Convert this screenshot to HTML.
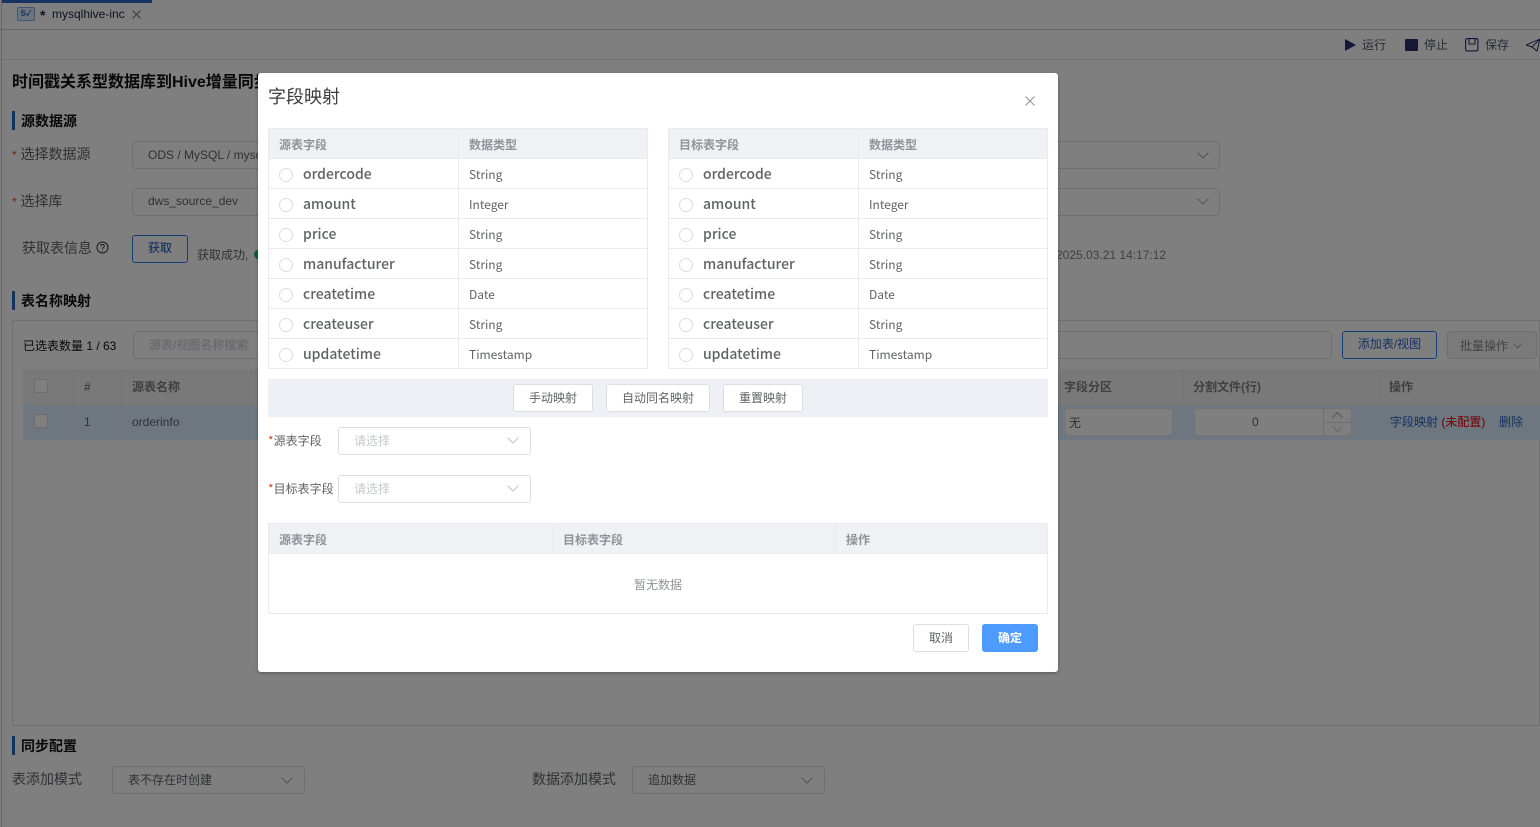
<!DOCTYPE html>
<html><head><meta charset="utf-8">
<style>
html,body{margin:0;padding:0;width:1540px;height:827px;overflow:hidden;background:#fff}
body{position:relative;font-family:"Liberation Sans","Noto Sans CJK SC",sans-serif;font-size:12px;color:#606266}
.a,.t{position:absolute}
.t{white-space:nowrap;line-height:20px}
.sel{position:absolute;border:1px solid #dcdee2;border-radius:4px;box-sizing:border-box;background:#fff}
.chev{position:absolute;width:12px;height:7px}
.bar{position:absolute;width:4px;background:#2d66c4}
.h{font-weight:700;color:#17233d;font-size:14px}
.overlay{position:absolute;left:0;top:0;width:1540px;height:827px;background:rgba(0,0,0,.5)}
.dlg{position:absolute;left:258px;top:73px;width:800px;height:599px;background:#fff;border-radius:3px;box-shadow:0 1px 3px rgba(0,0,0,.3);font-family:"Noto Sans CJK SC","Liberation Sans",sans-serif}
.d{position:absolute}
.dt{position:absolute;white-space:nowrap;line-height:20px}
.tb{position:absolute;width:380px;height:241px;border:1px solid #e8eaec;box-sizing:border-box;background:#fff}
.hd{position:absolute;left:0;top:0;right:0;height:30px;background:#f0f1f4;border-bottom:1px solid #e8eaec;box-sizing:border-box}
.vl{position:absolute;top:0;bottom:0;width:1px;background:#e8eaec}
.hl{position:absolute;left:0;right:0;height:1px;background:#e8eaec}
.th{position:absolute;font-size:12px;font-weight:700;color:#909399;white-space:nowrap;line-height:20px}
.fn{position:absolute;left:34px;font-size:14px;color:#606266;line-height:20px;white-space:nowrap;font-weight:500}
.ty{position:absolute;left:200px;font-size:12px;color:#606266;line-height:20px;white-space:nowrap}
.rd{position:absolute;left:10px;width:14px;height:14px;border:1px solid #dcdee2;border-radius:50%;box-sizing:border-box;background:#fff}
.btn{position:absolute;height:28px;box-sizing:border-box;border:1px solid #dcdee2;border-radius:3px;background:#fff;font-size:12px;color:#606266;text-align:center;line-height:25px}
</style></head>
<body>
<!-- background page -->
<div class="a" style="left:1px;top:0;width:1px;height:827px;background:#ccc"></div>
<div class="a" style="left:2px;top:0;width:150px;height:29px;background:#fff"></div>
<div class="a" style="left:2px;top:0;width:150px;height:3px;background:#2d66c4"></div>
<div class="a" style="left:0;top:29px;width:1540px;height:1px;background:#d0d0d0"></div>
<div class="a" style="left:0;top:59px;width:1540px;height:1px;background:#e4e4e4"></div>
<div class="a" style="left:17px;top:7px;width:18px;height:14px;border:1px solid #86a8e0;background:#dce8fa;border-radius:2px;box-sizing:border-box;font-size:8px;line-height:12px;color:#2d66c4;text-align:center;font-weight:700">S&#10003;</div>
<div class="t" style="left:40px;top:5px;font-size:14px;font-weight:700;color:#17233d">*</div>
<div class="t" style="left:52px;top:4px;font-size:12px;color:#17233d">mysqlhive-inc</div>
<svg class="a" style="left:132px;top:10px" width="9" height="9" viewBox="0 0 9 9"><path d="M.5.5L8.5 8.5M8.5.5L.5 8.5" stroke="#777" stroke-width="1"/></svg>

<svg class="a" style="left:1345px;top:39px" width="11" height="12"><path d="M0 0L11 6L0 12Z" fill="#2b2f6b"/></svg>
<div class="t" style="left:1362px;top:35px;color:#515a6e">运行</div>
<div class="a" style="left:1405px;top:39px;width:13px;height:12px;background:#2b2f6b;border-radius:1px"></div>
<div class="t" style="left:1424px;top:35px;color:#515a6e">停止</div>
<svg class="a" style="left:1465px;top:38px" width="14" height="14" viewBox="0 0 14 14" fill="none" stroke="#2b2f6b" stroke-width="1.1"><rect x=".6" y=".6" width="12.3" height="12.3" rx="1.5"/><path d="M4 .8V6H10V.8"/></svg>
<div class="t" style="left:1485px;top:35px;color:#515a6e">保存</div>
<svg class="a" style="left:1526px;top:38px" width="14" height="14" viewBox="0 0 14 14" fill="none" stroke="#2b2f6b" stroke-width="1"><path d="M0 7L14 1L11 13L6 9L0 7ZM6 9L14 1"/></svg>

<div class="t" style="left:12px;top:73px;font-size:16px;font-weight:700;color:#111">时间戳关系型数据库到Hive增量同步</div>

<div class="bar" style="left:12px;top:111px;height:19px;width:3px"></div>
<div class="t h" style="left:21px;top:111px;color:#111">源数据源</div>
<div class="t" style="left:12px;top:144px;font-size:14px"><span style="color:#ed4014;font-size:12px">*</span> 选择数据源</div>
<div class="sel" style="left:132px;top:141px;width:1088px;height:28px"></div>
<div class="t" style="left:148px;top:145px">ODS / MySQL / mysql</div>
<svg class="chev" style="left:1197px;top:152px" viewBox="0 0 12 7"><path d="M.5.5L6 6L11.5.5" fill="none" stroke="#aaa"/></svg>
<div class="t" style="left:12px;top:191px;font-size:14px"><span style="color:#ed4014;font-size:12px">*</span> 选择库</div>
<div class="sel" style="left:132px;top:188px;width:1088px;height:28px"></div>
<div class="t" style="left:148px;top:191px">dws_source_dev</div>
<svg class="chev" style="left:1197px;top:198px" viewBox="0 0 12 7"><path d="M.5.5L6 6L11.5.5" fill="none" stroke="#aaa"/></svg>
<div class="t" style="left:22px;top:238px;font-size:14px">获取表信息</div>
<svg class="a" style="left:96px;top:241px" width="13" height="13" viewBox="0 0 13 13" fill="none" stroke="#333"><circle cx="6.5" cy="6.5" r="5.5"/><path d="M4.7 5.2C4.7 3 8.3 3 8.3 5.2C8.3 6.4 6.5 6.4 6.5 8"/><path d="M6.5 9.2V10.2"/></svg>
<div class="a" style="left:132px;top:235px;width:56px;height:28px;border:1px solid #2d7ff0;border-radius:3px;box-sizing:border-box;text-align:center;line-height:25px;color:#2d66c4;font-weight:500">获取</div>
<div class="t" style="left:197px;top:245px;color:#666">获取成功,</div>
<div class="a" style="left:254px;top:250px;width:8px;height:9px;border-radius:50%;background:#19be6b"></div>
<div class="t" style="left:1056px;top:245px;color:#808080">2025.03.21 14:17:12</div>

<div class="bar" style="left:12px;top:291px;height:19px;width:3px"></div>
<div class="t h" style="left:21px;top:291px;color:#111">表名称映射</div>
<div class="a" style="left:12px;top:320px;width:1528px;height:406px;border:1px solid #e0e0e0;box-sizing:border-box"></div>
<div class="t" style="left:23px;top:336px;color:#111">已选表数量 1 / 63</div>
<div class="sel" style="left:133px;top:331px;width:1199px;height:28px"></div>
<div class="t" style="left:149px;top:335px;color:#c5c8ce">源表/视图名称搜索</div>
<div class="a" style="left:1342px;top:331px;width:95px;height:28px;border:1px solid #2d7ff0;border-radius:3px;box-sizing:border-box;text-align:center;line-height:25px;color:#2d66c4">添加表/视图</div>
<div class="a" style="left:1447px;top:331px;width:90px;height:28px;border:1px solid #dcdee2;border-radius:3px;box-sizing:border-box;background:#f4f4f4;color:#888;line-height:28px;padding-left:12px">批量操作</div>
<svg class="a" style="left:1513px;top:343px;width:9px;height:6px" viewBox="0 0 9 6"><path d="M.5.5L4.5 5L8.5.5" fill="none" stroke="#aaa"/></svg>

<div class="a" style="left:23px;top:369px;width:1517px;height:36px;background:#f2f3f5"></div>
<div class="a" style="left:23px;top:405px;width:1517px;height:35px;background:#dcecff"></div>
<div class="a" style="left:73px;top:369px;width:1px;height:71px;background:#e6e8eb"></div>
<div class="a" style="left:121px;top:369px;width:1px;height:71px;background:#e6e8eb"></div>
<div class="a" style="left:1183px;top:369px;width:1px;height:71px;background:#e6e8eb"></div>
<div class="a" style="left:1379px;top:369px;width:1px;height:71px;background:#e6e8eb"></div>
<div class="a" style="left:34px;top:379px;width:14px;height:14px;border:1px solid #ddd;background:#fff;box-sizing:border-box;border-radius:2px"></div>
<div class="a" style="left:34px;top:414px;width:14px;height:14px;border:1px solid #ddd;background:#fff;box-sizing:border-box;border-radius:2px"></div>
<div class="t" style="left:84px;top:377px;color:#808080;font-weight:700">#</div>
<div class="t" style="left:132px;top:377px;color:#808080;font-weight:700">源表名称</div>
<div class="t" style="left:1064px;top:377px;color:#808080;font-weight:700">字段分区</div>
<div class="t" style="left:1193px;top:377px;color:#808080;font-weight:700">分割文件(行)</div>
<div class="t" style="left:1389px;top:377px;color:#808080;font-weight:700">操作</div>
<div class="t" style="left:84px;top:412px">1</div>
<div class="t" style="left:132px;top:412px">orderinfo</div>
<div class="a" style="left:1064px;top:408px;width:109px;height:28px;background:#fff;border:1px solid #e6e6e6;border-radius:4px;box-sizing:border-box;padding-left:4px;line-height:28px">无</div>
<div class="a" style="left:1194px;top:408px;width:158px;height:28px;background:#fff;border:1px solid #e6e6e6;border-radius:4px;box-sizing:border-box"></div>
<div class="t" style="left:1252px;top:412px">0</div>
<div class="a" style="left:1323px;top:408px;width:1px;height:28px;background:#e0e0e0"></div>
<div class="a" style="left:1323px;top:422px;width:29px;height:1px;background:#e0e0e0"></div>
<svg class="a" style="left:1332px;top:412px" width="11" height="6" viewBox="0 0 11 6"><path d="M.5 5.5L5.5.5L10.5 5.5" fill="none" stroke="#aaa"/></svg>
<svg class="a" style="left:1332px;top:426px" width="11" height="6" viewBox="0 0 11 6"><path d="M.5.5L5.5 5.5L10.5.5" fill="none" stroke="#ccc"/></svg>
<div class="t" style="left:1390px;top:412px;color:#2d66c4">字段映射 <span style="color:#e00000">(未配置)</span></div>
<div class="t" style="left:1499px;top:412px;color:#2d66c4">删除</div>

<div class="bar" style="left:12px;top:736px;height:19px;width:3px"></div>
<div class="t h" style="left:21px;top:736px;color:#111">同步配置</div>
<div class="t" style="left:12px;top:769px;font-size:14px">表添加模式</div>
<div class="sel" style="left:112px;top:766px;width:193px;height:28px"></div>
<div class="t" style="left:128px;top:770px">表不存在时创建</div>
<svg class="chev" style="left:281px;top:777px" viewBox="0 0 12 7"><path d="M.5.5L6 6L11.5.5" fill="none" stroke="#aaa"/></svg>
<div class="t" style="left:532px;top:769px;font-size:14px">数据添加模式</div>
<div class="sel" style="left:632px;top:766px;width:193px;height:28px"></div>
<div class="t" style="left:648px;top:770px">追加数据</div>
<svg class="chev" style="left:801px;top:777px" viewBox="0 0 12 7"><path d="M.5.5L6 6L11.5.5" fill="none" stroke="#aaa"/></svg>

<div class="overlay"></div>

<!-- dialog -->
<div class="dlg">
<div class="dt" style="left:10px;top:12px;font-size:18px;line-height:22px;color:#3d3d3d;font-weight:400">字段映射</div>
<svg class="d" style="left:767px;top:23px" width="10" height="10" viewBox="0 0 10 10"><path d="M.5.5L9.5 9.5M9.5.5L.5 9.5" stroke="#909399" stroke-width="1"/></svg>

<!-- left table -->
<div class="tb" style="left:10px;top:55px">
 <div class="hd"></div><div class="vl" style="left:189px"></div>
 <div class="th" style="left:10px;top:6px">源表字段</div><div class="th" style="left:200px;top:6px">数据类型</div>
 <div class="hl" style="top:59px"></div><div class="hl" style="top:89px"></div><div class="hl" style="top:119px"></div><div class="hl" style="top:149px"></div><div class="hl" style="top:179px"></div><div class="hl" style="top:209px"></div>
 <div class="rd" style="top:39px"></div><div class="fn" style="top:35px">ordercode</div><div class="ty" style="top:36px">String</div>
 <div class="rd" style="top:69px"></div><div class="fn" style="top:65px">amount</div><div class="ty" style="top:66px">Integer</div>
 <div class="rd" style="top:99px"></div><div class="fn" style="top:95px">price</div><div class="ty" style="top:96px">String</div>
 <div class="rd" style="top:129px"></div><div class="fn" style="top:125px">manufacturer</div><div class="ty" style="top:126px">String</div>
 <div class="rd" style="top:159px"></div><div class="fn" style="top:155px">createtime</div><div class="ty" style="top:156px">Date</div>
 <div class="rd" style="top:189px"></div><div class="fn" style="top:185px">createuser</div><div class="ty" style="top:186px">String</div>
 <div class="rd" style="top:219px"></div><div class="fn" style="top:215px">updatetime</div><div class="ty" style="top:216px">Timestamp</div>
</div>
<!-- right table -->
<div class="tb" style="left:410px;top:55px">
 <div class="hd"></div><div class="vl" style="left:189px"></div>
 <div class="th" style="left:10px;top:6px">目标表字段</div><div class="th" style="left:200px;top:6px">数据类型</div>
 <div class="hl" style="top:59px"></div><div class="hl" style="top:89px"></div><div class="hl" style="top:119px"></div><div class="hl" style="top:149px"></div><div class="hl" style="top:179px"></div><div class="hl" style="top:209px"></div>
 <div class="rd" style="top:39px"></div><div class="fn" style="top:35px">ordercode</div><div class="ty" style="top:36px">String</div>
 <div class="rd" style="top:69px"></div><div class="fn" style="top:65px">amount</div><div class="ty" style="top:66px">Integer</div>
 <div class="rd" style="top:99px"></div><div class="fn" style="top:95px">price</div><div class="ty" style="top:96px">String</div>
 <div class="rd" style="top:129px"></div><div class="fn" style="top:125px">manufacturer</div><div class="ty" style="top:126px">String</div>
 <div class="rd" style="top:159px"></div><div class="fn" style="top:155px">createtime</div><div class="ty" style="top:156px">Date</div>
 <div class="rd" style="top:189px"></div><div class="fn" style="top:185px">createuser</div><div class="ty" style="top:186px">String</div>
 <div class="rd" style="top:219px"></div><div class="fn" style="top:215px">updatetime</div><div class="ty" style="top:216px">Timestamp</div>
</div>

<div class="d" style="left:10px;top:306px;width:780px;height:38px;background:#eff0f5"></div>
<div class="btn" style="left:255px;top:311px;width:80px">手动映射</div>
<div class="btn" style="left:348px;top:311px;width:104px">自动同名映射</div>
<div class="btn" style="left:465px;top:311px;width:80px">重置映射</div>

<div class="dt" style="left:10px;top:358px;color:#606266"><span style="color:#ed4014">*</span>源表字段</div>
<div class="d" style="left:80px;top:354px;width:193px;height:28px;border:1px solid #dcdee2;border-radius:3px;box-sizing:border-box"></div>
<div class="dt" style="left:96px;top:358px;color:#c5c8ce">请选择</div>
<svg class="d" style="left:249px;top:364px" width="12" height="7" viewBox="0 0 12 7"><path d="M.5.5L6 6L11.5.5" fill="none" stroke="#c0c4cc"/></svg>

<div class="dt" style="left:10px;top:406px;color:#606266"><span style="color:#ed4014">*</span>目标表字段</div>
<div class="d" style="left:80px;top:402px;width:193px;height:28px;border:1px solid #dcdee2;border-radius:3px;box-sizing:border-box"></div>
<div class="dt" style="left:96px;top:406px;color:#c5c8ce">请选择</div>
<svg class="d" style="left:249px;top:412px" width="12" height="7" viewBox="0 0 12 7"><path d="M.5.5L6 6L11.5.5" fill="none" stroke="#c0c4cc"/></svg>

<div class="d" style="left:10px;top:450px;width:780px;height:91px;border:1px solid #e8eaec;box-sizing:border-box">
 <div class="hd"></div>
 <div class="vl" style="left:283px;height:30px;bottom:auto"></div>
 <div class="vl" style="left:566px;height:30px;bottom:auto"></div>
 <div class="th" style="left:10px;top:6px">源表字段</div>
 <div class="th" style="left:294px;top:6px">目标表字段</div>
 <div class="th" style="left:577px;top:6px">操作</div>
 <div class="dt" style="left:0;right:0;top:51px;text-align:center;color:#909399">暂无数据</div>
</div>

<div class="btn" style="left:655px;top:551px;width:56px">取消</div>
<div class="btn" style="left:724px;top:551px;width:56px;background:#4e9bff;border-color:#4e9bff;color:#fff;font-weight:700">确定</div>
</div>
</body></html>
